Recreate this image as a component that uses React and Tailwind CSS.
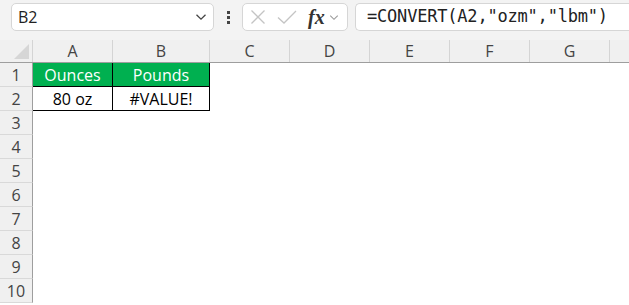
import { Fragment } from 'react';

const cols = [
  { name: 'A', w: 'w-[80px]' },
  { name: 'B', w: 'w-[97px]' },
  { name: 'C', w: 'w-[80px]' },
  { name: 'D', w: 'w-[80px]' },
  { name: 'E', w: 'w-[80px]' },
  { name: 'F', w: 'w-[80px]' },
  { name: 'G', w: 'w-[80px]' },
];

const rows = [1, 2, 3, 4, 5, 6, 7, 8, 9, 10];

function Chevron({ className }) {
  return (
    <svg viewBox="0 0 12 8" className={className} fill="none" stroke="currentColor" strokeWidth="1.3">
      <path d="M1.5 1.8 L6 6.2 L10.5 1.8" />
    </svg>
  );
}

function Cell({ row, col }) {
  if (row === 1 && col === 'A') {
    return <div className="flex h-full items-center justify-center border-r border-b border-black bg-[#00b050] text-white">Ounces</div>;
  }
  if (row === 1 && col === 'B') {
    return <div className="flex h-full items-center justify-center border-r border-b border-black bg-[#00b050] text-white">Pounds</div>;
  }
  if (row === 2 && col === 'A') {
    return <div className="flex h-full items-center justify-center border-r border-b border-black bg-white text-black">80 oz</div>;
  }
  if (row === 2 && col === 'B') {
    return <div className="flex h-full items-center justify-center border-r border-b border-black bg-white text-black">#VALUE!</div>;
  }
  return <div className="h-full bg-white" />;
}

export default function App() {
  return (
    <div className="h-[305px] w-[629px] overflow-hidden bg-white font-['Open_Sans',sans-serif]">
      {/* formula bar */}
      <div className="flex h-[40px] items-start bg-[#f3f3f3] pt-[3px] pl-[11px]">
        <div className="flex h-[28px] w-[203px] items-center justify-between rounded-[5px] border border-[#d6d6d6] bg-white pr-[6px] pl-[6px]">
          <span className="text-[16px] text-[#222]">B2</span>
          <Chevron className="h-[8px] w-[12px] text-[#444]" />
        </div>
        <div className="flex h-[28px] w-[28px] flex-col items-center justify-center gap-[2px]">
          <span className="h-[3px] w-[3px] bg-[#444]" />
          <span className="h-[3px] w-[3px] bg-[#444]" />
          <span className="h-[3px] w-[3px] bg-[#444]" />
        </div>
        <div className="flex h-[28px] w-[106px] items-center rounded-[5px] border border-[#d6d6d6] bg-white pl-[7px]">
          <svg viewBox="0 0 16 16" className="h-[16px] w-[16px] text-[#c4c4c4]" fill="none" stroke="currentColor" strokeWidth="1.3">
            <path d="M1.5 1.5 L14.5 14.5 M14.5 1.5 L1.5 14.5" />
          </svg>
          <svg viewBox="0 0 20 16" className="ml-[11px] h-[16px] w-[20px] text-[#c4c4c4]" fill="none" stroke="currentColor" strokeWidth="1.3">
            <path d="M1 8.5 L7 14 L19 2" />
          </svg>
          <span className="ml-[11px] font-['Liberation_Serif',serif] text-[20px] leading-none font-bold text-[#333] italic">fx</span>
          <Chevron className="ml-[4px] h-[7px] w-[10px] text-[#9a9a9a]" />
        </div>
        <div className="ml-[7px] flex h-[28px] flex-1 items-center rounded-l-[5px] border border-r-0 border-[#d6d6d6] bg-white pl-[11px]">
          <span className="font-['DejaVu_Sans_Mono',monospace] text-[17px] tracking-[-0.2px] text-[#222]">=CONVERT(A2,"ozm","lbm")</span>
        </div>
      </div>

      {/* column headers */}
      <div className="flex h-[23px] border-b border-[#9e9e9e] bg-[#f0f0f0]">
        <div className="relative w-[33px] shrink-0 border-r border-[#d4d4d4]">
          <svg viewBox="0 0 16 16" className="absolute right-[3px] bottom-[3px] h-[15px] w-[15px]">
            <path d="M16 0 L16 16 L0 16 Z" fill="#d6d6d6" />
          </svg>
        </div>
        {cols.map((c) => (
          <div key={c.name} className={`${c.w} flex shrink-0 items-center justify-center border-r border-[#d4d4d4] text-[16px] text-[#444]`}>
            {c.name}
          </div>
        ))}
        <div className="flex-1" />
      </div>

      {/* rows */}
      {rows.map((r) => (
        <div key={r} className="flex h-[24px]">
          <div className="flex w-[33px] shrink-0 items-center justify-center border-r border-b border-r-[#9e9e9e] border-b-[#d9d9d9] bg-[#f0f0f0] text-[16px] text-[#444]">
            {r}
          </div>
          {cols.map((c) => (
            <Fragment key={c.name}>
              <div className={`${c.w} shrink-0 text-[16px]`}>
                <Cell row={r} col={c.name} />
              </div>
            </Fragment>
          ))}
          <div className="flex-1 bg-white" />
        </div>
      ))}
    </div>
  );
}
